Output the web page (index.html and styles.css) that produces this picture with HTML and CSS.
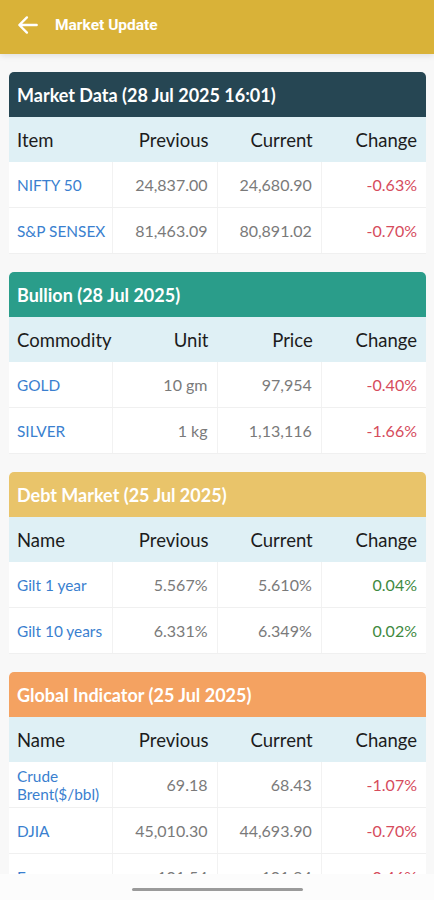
FILE: index.html
```html
<!DOCTYPE html>
<html lang="en">
<head>
    <meta charset="UTF-8">
    <meta name="viewport" content="width=device-width, initial-scale=1.0">
    <title>Market Update</title>
    <link rel="stylesheet" href="styles.css">
</head>
<body>
    <div class="app-bar">
        <svg class="back" width="26" height="26" viewBox="0 0 24 24">
            <path d="M20 12H5M11 5l-7 7 7 7" fill="none" stroke="#fff" stroke-width="2.2" stroke-linecap="round" stroke-linejoin="round"/>
        </svg>
        <span class="app-title">Market Update</span>
    </div>

    <div class="content">
        <div class="card">
            <div class="card-title dark">Market Data (28 Jul 2025 16:01)</div>
            <div class="row head">
                <div class="cell left">Item</div>
                <div class="cell">Previous</div>
                <div class="cell">Current</div>
                <div class="cell">Change</div>
            </div>
            <div class="row">
                <div class="cell left name">NIFTY 50</div>
                <div class="cell">24,837.00</div>
                <div class="cell">24,680.90</div>
                <div class="cell down">-0.63%</div>
            </div>
            <div class="row">
                <div class="cell left name">S&amp;P SENSEX</div>
                <div class="cell">81,463.09</div>
                <div class="cell">80,891.02</div>
                <div class="cell down">-0.70%</div>
            </div>
        </div>

        <div class="card">
            <div class="card-title teal">Bullion (28 Jul 2025)</div>
            <div class="row head">
                <div class="cell left">Commodity</div>
                <div class="cell">Unit</div>
                <div class="cell">Price</div>
                <div class="cell">Change</div>
            </div>
            <div class="row">
                <div class="cell left name">GOLD</div>
                <div class="cell">10 gm</div>
                <div class="cell">97,954</div>
                <div class="cell down">-0.40%</div>
            </div>
            <div class="row">
                <div class="cell left name">SILVER</div>
                <div class="cell">1 kg</div>
                <div class="cell">1,13,116</div>
                <div class="cell down">-1.66%</div>
            </div>
        </div>

        <div class="card">
            <div class="card-title sand">Debt Market (25 Jul 2025)</div>
            <div class="row head">
                <div class="cell left">Name</div>
                <div class="cell">Previous</div>
                <div class="cell">Current</div>
                <div class="cell">Change</div>
            </div>
            <div class="row">
                <div class="cell left name">Gilt 1 year</div>
                <div class="cell">5.567%</div>
                <div class="cell">5.610%</div>
                <div class="cell up">0.04%</div>
            </div>
            <div class="row">
                <div class="cell left name">Gilt 10 years</div>
                <div class="cell">6.331%</div>
                <div class="cell">6.349%</div>
                <div class="cell up">0.02%</div>
            </div>
        </div>

        <div class="card">
            <div class="card-title orange">Global Indicator (25 Jul 2025)</div>
            <div class="row head">
                <div class="cell left">Name</div>
                <div class="cell">Previous</div>
                <div class="cell">Current</div>
                <div class="cell">Change</div>
            </div>
            <div class="row">
                <div class="cell left name">Crude Brent($/bbl)</div>
                <div class="cell">69.18</div>
                <div class="cell">68.43</div>
                <div class="cell down">-1.07%</div>
            </div>
            <div class="row">
                <div class="cell left name">DJIA</div>
                <div class="cell">45,010.30</div>
                <div class="cell">44,693.90</div>
                <div class="cell down">-0.70%</div>
            </div>
            <div class="row">
                <div class="cell left name">Euro</div>
                <div class="cell">101.54</div>
                <div class="cell">101.94</div>
                <div class="cell down">-0.46%</div>
            </div>
        </div>
    </div>

    <div class="bottom">
        <div class="home-bar"></div>
    </div>
</body>
</html>
```

FILE: styles.css
```css
body {
    margin: 0;
    height: 900px;
    overflow: hidden;
    background-color: #f8f8f8;
    font-family: Lato, "Open Sans", sans-serif;
    display: flex;
    flex-direction: column;
}
.app-bar {
    height: 54px;
    box-sizing: border-box;
    flex-shrink: 0;
    background-color: #d9b238;
    display: flex;
    align-items: center;
    padding: 0 0 5px 15px;
    box-shadow: 0 2px 6px rgba(0, 0, 0, 0.1);
    position: relative;
    z-index: 1;
}
.app-title {
    margin-left: 14px;
    color: #fff;
    font-family: Roboto, sans-serif;
    font-weight: 700;
    font-size: 15.5px;
}
.content {
    flex: 1;
    overflow: hidden;
    padding: 18px 8px 0 9px;
    display: flex;
    flex-direction: column;
    gap: 18px;
}
.card {
    background-color: #fff;
    border-radius: 5px 5px 0 0;
    overflow: hidden;
    flex-shrink: 0;
}
.card-title {
    height: 45px;
    display: flex;
    align-items: center;
    padding-left: 8px;
    color: #fff;
    font-size: 18px;
    font-weight: 700;
}
.dark { background-color: #264653; }
.teal { background-color: #2a9d8a; }
.sand { background-color: #e9c46a; }
.orange { background-color: #f4a261; }
.row {
    display: grid;
    grid-template-columns: repeat(4, 1fr);
    min-height: 45px;
    border-bottom: 1px solid #f0f0f0;
}
.row.head {
    background-color: #dff0f5;
    border-bottom: none;
}
.cell {
    display: flex;
    align-items: center;
    justify-content: flex-end;
    text-align: right;
    padding: 0 9px;
    font-size: 16px;
    color: #7a7a7a;
    border-right: 1px solid #f2f2f2;
}
.cell:last-child {
    border-right: none;
}
.head .cell {
    font-size: 18.5px;
    color: #1c1c1c;
    border-right: none;
}
.cell.left {
    justify-content: flex-start;
    text-align: left;
    padding: 0 0 0 8px;
}
.name {
    color: #3a7fcf;
    font-size: 15.4px;
    line-height: 18px;
}
.down { color: #d64c5c; }
.up { color: #3f8a3f; }
.bottom {
    height: 26px;
    flex-shrink: 0;
    background-color: #fcfcfc;
    display: flex;
    justify-content: center;
    padding-top: 14px;
    box-sizing: border-box;
}
.home-bar {
    width: 171px;
    height: 3px;
    border-radius: 2px;
    background-color: #9a9a9a;
}
```
